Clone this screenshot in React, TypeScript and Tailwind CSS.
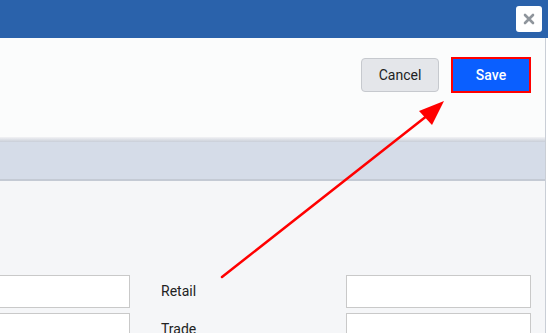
import React from "react";

function CloseButton() {
    return (
        <button className="flex h-[26px] w-[26px] items-center justify-center rounded-[3px] bg-white">
            <svg width="12" height="12" viewBox="0 0 12 12">
                <path d="M2 2 L10 10 M10 2 L2 10" stroke="#8f959c" strokeWidth="2.6" strokeLinecap="round" />
            </svg>
        </button>
    );
}

function FormRow({ label }: { label: string }) {
    return (
        <div className="flex h-[33px] items-center">
            <input className="h-[33px] w-[130px] border border-l-0 border-[#c9c9c9] bg-white outline-none" />
            <span className="ml-[31px] w-[185px] text-[14px] text-[#222]">{label}</span>
            <input className="h-[33px] w-[185px] border border-[#c9c9c9] bg-white outline-none" />
        </div>
    );
}

export default function App() {
    return (
        <div className="relative flex h-[333px] w-[548px] flex-col overflow-hidden bg-white font-['Roboto','Liberation_Sans',sans-serif]">
            {/* dialog header */}
            <div className="flex h-[38px] shrink-0 items-center justify-end bg-[#2a62ab] pr-[6px]">
                <CloseButton />
            </div>

            <div className="flex flex-1">
                <div className="flex w-[545px] flex-col">
                    {/* toolbar */}
                    <div className="flex h-[99px] shrink-0 items-start justify-end gap-[12px] bg-[#fbfcfc] pr-[14px] pt-[19px]">
                        <div className="flex h-[36px] items-center">
                            <button className="h-[34px] w-[78px] rounded-[4px] border border-[#c6c9ce] bg-[#e4e6ea] text-[14px] text-[#222]">
                                Cancel
                            </button>
                        </div>
                        <button className="h-[36px] w-[80px] border-2 border-[#ff0000] bg-[#0a5fff] text-[14px] font-medium text-white">
                            Save
                        </button>
                    </div>

                    {/* section band */}
                    <div className="h-[5px] shrink-0 bg-gradient-to-b from-[#f2f3f5] to-[#c9ced8]" />
                    <div className="h-[39px] shrink-0 border-b-2 border-[#c4cad4] bg-[#d5dce8]" />

                    {/* form */}
                    <div className="flex flex-1 flex-col gap-[5px] bg-[#f5f6f8] pt-[94px]">
                        <FormRow label="Retail" />
                        <FormRow label="Trade" />
                    </div>
                </div>
                <div className="w-[1px] bg-[#c9ced6]" />
                <div className="flex-1 bg-white" />
            </div>

            {/* annotation arrow */}
            <svg className="pointer-events-none absolute left-0 top-0" width="548" height="333">
                <line x1="222" y1="277" x2="428" y2="115" stroke="#ff0000" strokeWidth="2.5" strokeLinecap="round" />
                <polygon points="444,101 419,111 432,125" fill="#ff0000" />
            </svg>
        </div>
    );
}
